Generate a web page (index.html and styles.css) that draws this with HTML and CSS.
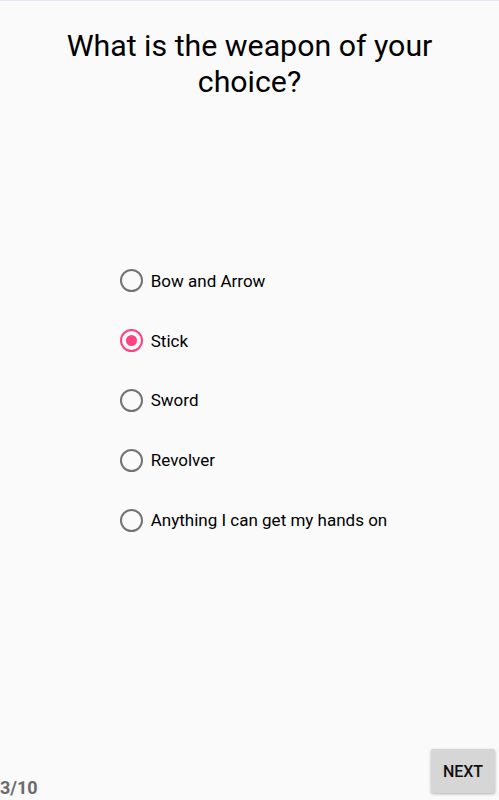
FILE: index.html
```html
<!DOCTYPE html>
<html lang="en">
<head>
    <meta charset="UTF-8">
    <meta name="viewport" content="width=499">
    <title>Quiz</title>
    <link rel="stylesheet" href="styles.css">
</head>
<body>
    <div class="screen">
        <h1 class="question">What is the weapon of your choice?</h1>

        <div class="options">
            <label class="option">
                <input type="radio" name="weapon" value="bow">
                <span class="dot"></span>
                <span class="label">Bow and Arrow</span>
            </label>
            <label class="option">
                <input type="radio" name="weapon" value="stick" checked>
                <span class="dot"></span>
                <span class="label">Stick</span>
            </label>
            <label class="option">
                <input type="radio" name="weapon" value="sword">
                <span class="dot"></span>
                <span class="label">Sword</span>
            </label>
            <label class="option">
                <input type="radio" name="weapon" value="revolver">
                <span class="dot"></span>
                <span class="label">Revolver</span>
            </label>
            <label class="option">
                <input type="radio" name="weapon" value="anything">
                <span class="dot"></span>
                <span class="label">Anything I can get my hands on</span>
            </label>
        </div>

        <div class="footer">
            <span class="progress">3/10</span>
            <button class="next">NEXT</button>
        </div>
    </div>
</body>
</html>
```

FILE: styles.css
```css
html, body {
    margin: 0;
    padding: 0;
}
body {
    background: #fafafa;
    font-family: Roboto, 'Noto Sans', sans-serif;
    color: #000;
}
.screen {
    display: grid;
    height: 800px;
    box-sizing: border-box;
    border-top: 1px solid #e6e6f7;
}
.screen > * {
    grid-area: 1 / 1;
}
.question {
    align-self: start;
    margin: 27px 40px 0;
    font-size: 30.3px;
    font-weight: 400;
    line-height: 36px;
    text-align: center;
}
.options {
    align-self: center;
    justify-self: center;
    display: flex;
    flex-direction: column;
    margin: 0 0 0 8px;
}
.option {
    display: flex;
    align-items: center;
    height: 59.8px;
    cursor: pointer;
}
.option input {
    display: none;
}
.dot {
    width: 23px;
    height: 23px;
    box-sizing: border-box;
    border: 2px solid #737373;
    border-radius: 50%;
    display: flex;
    align-items: center;
    justify-content: center;
}
.option input:checked + .dot {
    border-color: #ff4081;
}
.option input:checked + .dot::after {
    content: "";
    width: 11px;
    height: 11px;
    border-radius: 50%;
    background: #ff4081;
}
.label {
    margin-left: 8px;
    font-size: 17px;
    color: #000;
}
.footer {
    align-self: end;
    display: flex;
    justify-content: space-between;
    align-items: flex-end;
}
.progress {
    margin-bottom: 2px;
    font-size: 18px;
    font-weight: 700;
    color: #6b6b6b;
}
.next {
    width: 64px;
    height: 44px;
    margin: 0 4px 7px 0;
    border: none;
    border-radius: 2px;
    background: #d6d6d6;
    box-shadow: 0 1px 3px rgba(0, 0, 0, 0.3);
    font-family: Roboto, sans-serif;
    font-size: 16px;
    font-weight: 500;
    color: #111;
    cursor: pointer;
}
```
